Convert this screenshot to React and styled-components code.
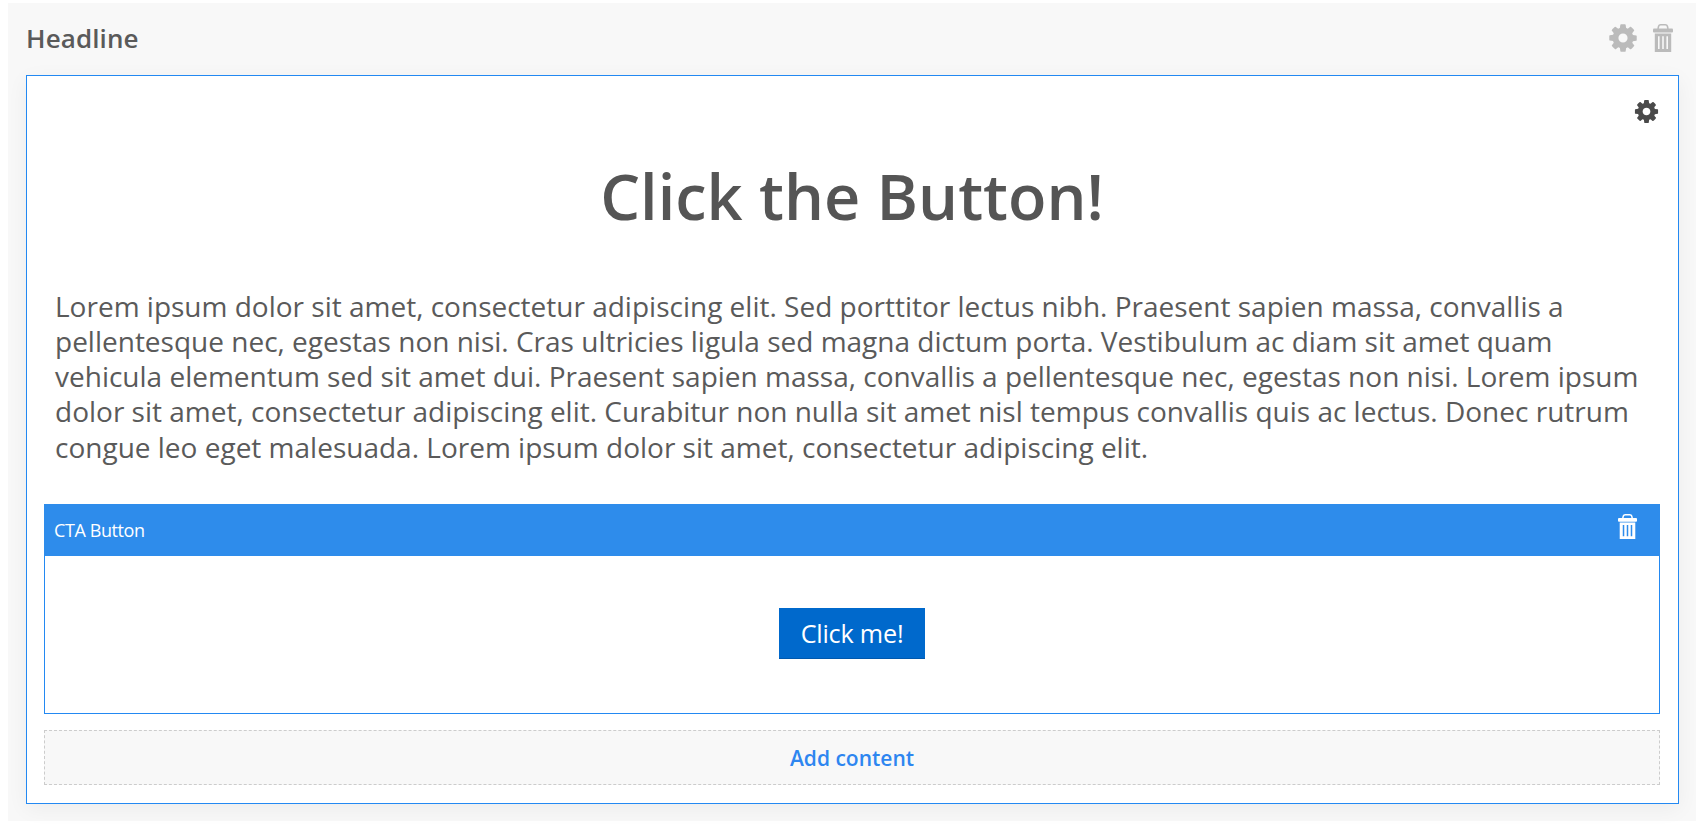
import React from "react";
import styled, { createGlobalStyle } from "styled-components";

const Global = createGlobalStyle`
  html, body { margin: 0; padding: 0; background: #fff; overflow: hidden; }
  body { font-family: "Open Sans", "Liberation Sans", sans-serif; color: #555; }
`;

const Page = styled.div`
  height: 825px;
  box-sizing: border-box;
  padding: 3px 0 4px 8px;
`;
const Panel = styled.section`
  height: 100%;
  box-sizing: border-box;
  background: #f8f8f8;
  padding: 0 17px 0 18px;
`;
const PanelHeader = styled.header`
  height: 72px;
  display: flex;
  align-items: center;
  justify-content: space-between;
  padding: 0 6px 2px 0;
  box-sizing: border-box;
`;
const PanelTitle = styled.h2`
  margin: 0;
  font-size: 26px;
  font-weight: 600;
  letter-spacing: 0.1px;
  color: #5a5a5a;
`;
const IconRow = styled.div`
  display: flex;
  align-items: center;
  gap: 14px;
  color: #bbb;
`;
const Card = styled.div`
  height: 729px;
  box-sizing: border-box;
  background: #fff;
  border: 1px solid #2389f2;
  box-shadow: 0 5px 20px rgba(0, 0, 0, 0.05);
  padding: 0 18px 0 17px;
  position: relative;
`;
const CardGear = styled.div`
  position: absolute;
  top: 22px;
  right: 18px;
  color: #4a4a4a;
  display: flex;
`;
const Heading = styled.h1`
  margin: 0;
  box-sizing: border-box;
  padding-top: 76px;
  height: 213px;
  font-size: 63px;
  line-height: 87px;
  font-weight: 600;
  text-align: center;
  color: #555;
`;
const Body = styled.p`
  margin: 0;
  box-sizing: border-box;
  padding: 0 11px;
  height: 215px;
  font-size: 28px;
  line-height: 35.15px;
  color: #5a5a5a;
`;
const Block = styled.div`
  height: 210px;
  box-sizing: border-box;
  border: 1px solid #2389f2;
  border-top: 0;
`;
const BlockBar = styled.div`
  height: 52px;
  box-sizing: border-box;
  margin: 0 -1px;
  background: #2e8ceb;
  color: #fff;
  display: flex;
  align-items: flex-start;
  justify-content: space-between;
  padding: 10px 23px 0 10px;
  font-size: 18px;
  line-height: 32px;
  letter-spacing: -0.4px;
`;
const BlockBody = styled.div`
  display: flex;
  justify-content: center;
  padding-top: 52px;
`;
const CtaButton = styled.button`
  width: 146px;
  height: 51px;
  border: 0;
  border-bottom: 1px solid #0058ad;
  background: #0069cc;
  color: #fff;
  font: 400 25.2px "Open Sans", sans-serif;
  letter-spacing: -0.2px;
  padding: 0;
`;
const AddContent = styled.div`
  margin-top: 16px;
  height: 55px;
  box-sizing: border-box;
  border: 1px dashed #ccc;
  background: #f8f8f8;
  display: flex;
  align-items: center;
  justify-content: center;
  font-size: 21px;
  font-weight: 600;
  color: #2e86f0;
`;

const Gear = ({ size }) => (
  <svg width={size} height={size} viewBox="0 0 1792 1792" fill="currentColor" style={{ display: "block" }}>
    <path d="M1152 896q0-106-75-181t-181-75-181 75-75 181 75 181 181 75 181-75 75-181zm512-109v222q0 12-8 23t-20 13l-185 28q-19 54-39 91 35 50 107 138 10 12 10 25t-9 23q-27 37-99 108t-94 71q-12 0-26-9l-138-108q-44 23-91 38-16 136-29 186-7 28-36 28h-222q-14 0-24.500-8.500t-11.500-21.500l-28-184q-49-16-90-37l-141 107q-10 9-25 9-14 0-25-11-126-114-165-168-7-10-7-23 0-12 8-23 15-21 51-66.500t54-70.500q-27-50-41-99l-183-27q-13-2-21-12.500t-8-23.500v-222q0-12 8-23t19-13l186-28q14-46 39-92-40-57-107-138-10-12-10-24 0-10 9-23 26-36 98.500-107.500t94.500-71.500q13 0 26 10l138 107q44-23 91-38 16-136 29-186 7-28 36-28h222q14 0 24.500 8.500t11.500 21.500l28 184q49 16 90 37l142-107q9-9 24-9 13 0 25 10 129 119 165 170 7 8 7 22 0 12-8 23-15 21-51 66.500t-54 70.500q26 50 41 98l183 28q13 2 21 12.500t8 23.500z" />
  </svg>
);

const Trash = ({ w, h }) => (
  <svg width={w} height={h} viewBox="0 0 20 28" preserveAspectRatio="none" fill="currentColor" style={{ display: "block" }}>
    <path d="M5 5 L5.6 2.2 Q6 0.8 7.6 0.8 H12.4 Q14 0.8 14.4 2.2 L15 5" fill="none" stroke="currentColor" strokeWidth="1.6" />
    <rect x="0" y="4.4" width="20" height="4.2" rx="1" />
    <path fillRule="evenodd" d="M1.8 9.6 H18.2 V28 H1.8 Z M5 12.2 V25 H6.6 V12.2 Z M9.2 12.2 V25 H10.8 V12.2 Z M13.4 12.2 V25 H15 V12.2 Z" />
  </svg>
);

export default function App() {
  return (
    <Page>
      <Global />
      <Panel>
        <PanelHeader>
          <PanelTitle>Headline</PanelTitle>
          <IconRow>
            <Gear size={32} />
            <Trash w={20} h={28} />
          </IconRow>
        </PanelHeader>
        <Card>
          <CardGear><Gear size={27} /></CardGear>
          <Heading>Click the Button!</Heading>
          <Body>
            Lorem ipsum dolor sit amet, consectetur adipiscing elit. Sed porttitor lectus nibh. Praesent sapien massa, convallis a pellentesque nec, egestas non nisi. Cras ultricies ligula sed magna dictum porta. Vestibulum ac diam sit amet quam vehicula elementum sed sit amet dui. Praesent sapien massa, convallis a pellentesque nec, egestas non nisi. Lorem ipsum dolor sit amet, consectetur adipiscing elit. Curabitur non nulla sit amet nisl tempus convallis quis ac lectus. Donec rutrum congue leo eget malesuada. Lorem ipsum dolor sit amet, consectetur adipiscing elit.
          </Body>
          <Block>
            <BlockBar>
              <span>CTA Button</span>
              <Trash w={19} h={25} />
            </BlockBar>
            <BlockBody>
              <CtaButton>Click me!</CtaButton>
            </BlockBody>
          </Block>
          <AddContent>Add content</AddContent>
        </Card>
      </Panel>
    </Page>
  );
}
